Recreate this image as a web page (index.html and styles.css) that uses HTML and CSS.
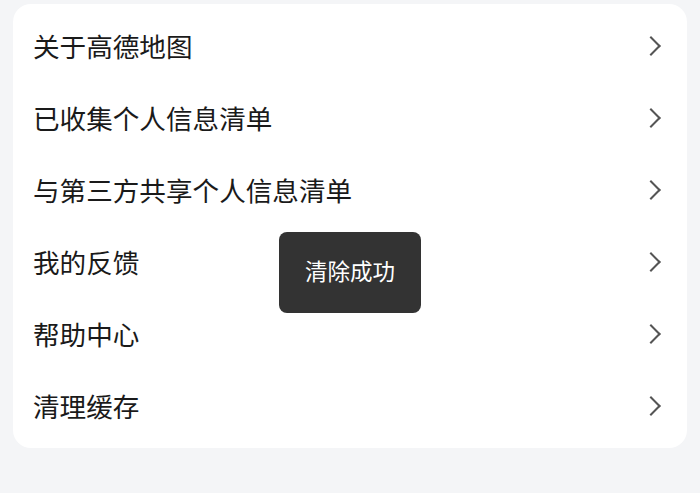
FILE: index.html
```html
<!DOCTYPE html>
<html lang="zh-CN">
<head>
    <meta charset="UTF-8">
    <meta name="viewport" content="width=device-width, initial-scale=1.0">
    <title>设置</title>
    <link rel="stylesheet" href="styles.css">
</head>
<body>

    <div class="menu-card">
        <div class="menu-row"><span class="menu-label">关于高德地图</span><span class="chevron"></span></div>
        <div class="menu-row"><span class="menu-label">已收集个人信息清单</span><span class="chevron"></span></div>
        <div class="menu-row"><span class="menu-label">与第三方共享个人信息清单</span><span class="chevron"></span></div>
        <div class="menu-row"><span class="menu-label">我的反馈</span><span class="chevron"></span></div>
        <div class="menu-row"><span class="menu-label">帮助中心</span><span class="chevron"></span></div>
        <div class="menu-row"><span class="menu-label">清理缓存</span><span class="chevron"></span></div>
    </div>

    <!-- toast shown after clearing cache -->
    <div class="toast">清除成功</div>

</body>
</html>
```

FILE: styles.css
```css
body {
    margin: 0;
    padding: 4px 13px;
    background: #f4f5f7;
    font-family: "Noto Sans CJK SC", "Noto Sans", sans-serif;
    color: #1a1a1a;
}

.menu-card {
    background: #fff;
    border-radius: 18px;
    padding: 6px 0;
}

.menu-row {
    height: 72px;
    display: flex;
    align-items: center;
    justify-content: space-between;
    padding: 0 25px 0 20px;
}

.menu-label {
    font-size: 26.6px;
    line-height: 1;
}

.chevron {
    width: 12px;
    height: 12px;
    border-top: 2px solid #555;
    border-right: 2px solid #555;
    transform: rotate(45deg);
    margin-right: 4px;
}

.toast {
    position: fixed;
    left: 279px;
    top: 232px;
    width: 142px;
    height: 81px;
    box-sizing: border-box;
    padding-bottom: 6px;
    background: #333;
    border-radius: 8px;
    color: #fff;
    font-size: 22.5px;
    display: flex;
    align-items: center;
    justify-content: center;
}
```
